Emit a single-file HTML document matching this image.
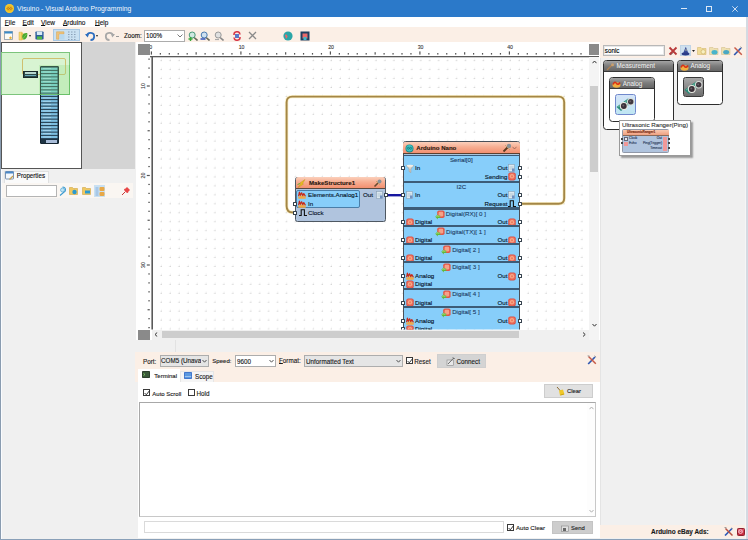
<!DOCTYPE html>
<html><head><meta charset="utf-8">
<style>
*{margin:0;padding:0;box-sizing:border-box}
html,body{width:748px;height:540px;overflow:hidden;background:#f0f0f0}
body{font-family:"Liberation Sans",sans-serif;font-size:6.2px;color:#111;position:relative}
.a{position:absolute}
.t{position:absolute;white-space:nowrap;line-height:1;-webkit-text-stroke:0.12px currentColor}
u{text-decoration-thickness:0.6px;text-underline-offset:0.3px}
</style></head><body>
<!-- window border -->
<div class="a" style="left:0;top:0;width:748px;height:540px;background:#f0f0f0"></div>
<!-- title bar -->
<div class="a" style="left:0;top:0;width:748px;height:17px;background:#2b79c9"></div>
<div class="a" style="left:5px;top:4px;width:9px;height:9px;border-radius:50%;background:#f2c23a"></div>
<div class="t" style="left:17px;top:5.6px;font-size:6.8px;color:#f4f8fc;-webkit-text-stroke:0">Visuino - Visual Arduino Programming</div>
<!-- title icons -->
<svg class="a" style="left:4.5px;top:3.5px" width="9" height="9" viewBox="0 0 9 9"><circle cx="4.5" cy="4.5" r="4.2" fill="#f2c630"/><circle cx="4.5" cy="4.5" r="3" fill="#e8b820"/><path d="M2 4.5c0.6-1.2 1.6-1.2 2.5 0s1.9 1.2 2.5 0c-0.6-1.2-1.6-1.2-2.5 0s-1.9 1.2-2.5 0z" fill="none" stroke="#b86a18" stroke-width="0.8"/></svg>
<div class="a" style="left:681px;top:8.2px;width:6px;height:0.9px;background:#dce8f6"></div>
<div class="a" style="left:705.9px;top:5.7px;width:6px;height:6px;border:0.9px solid #dce8f6"></div>
<svg class="a" style="left:731.5px;top:5.5px" width="6" height="6" viewBox="0 0 6 6"><path d="M0.3 0.3L5.7 5.7M5.7 0.3L0.3 5.7" stroke="#dce8f6" stroke-width="0.9"/></svg>
<!-- menu -->
<div class="a" style="left:0;top:17px;width:747px;height:10px;background:#fff"></div>
<div class="t" style="left:4.8px;top:19.8px;font-size:6.5px"><u>F</u>ile</div>
<div class="t" style="left:22.6px;top:19.8px;font-size:6.5px"><u>E</u>dit</div>
<div class="t" style="left:41px;top:19.8px;font-size:6.5px"><u>V</u>iew</div>
<div class="t" style="left:63px;top:19.8px;font-size:6.5px"><u>A</u>rduino</div>
<div class="t" style="left:95px;top:19.8px;font-size:6.5px"><u>H</u>elp</div>
<!-- toolbar -->
<div class="a" style="left:0;top:27px;width:747px;height:15.5px;background:#fbefe6"></div>
<!-- new -->
<svg class="a" style="left:4px;top:31px" width="9" height="9" viewBox="0 0 9 9"><rect x="0.5" y="0.5" width="8" height="8" fill="#fdfbf5" stroke="#8a9aa8" stroke-width="0.8"/><rect x="0.5" y="0.5" width="8" height="2" fill="#3a8ac8"/><path d="M6.5 5l0.5 1.2 1.2 0.2-0.9 0.8 0.3 1.2-1.1-0.6-1.1 0.6 0.3-1.2-0.9-0.8 1.2-0.2z" fill="#e8b030"/></svg>
<!-- open -->
<svg class="a" style="left:17.5px;top:30.5px" width="10" height="10" viewBox="0 0 10 10"><path d="M1 1.2h3.2v7.8h-3.2z" fill="#f2d870" stroke="#d8b040" stroke-width="0.5"/><path d="M3 1.5L5.5 2.5V9L3 8.5z" fill="#e8c050"/><path d="M4.2 5.5C4.2 2.8 7 1.8 9.3 2.2C9.6 5 8.6 8.4 5.5 8.6C4.8 7.8 4.2 6.8 4.2 5.5z" fill="#48a830"/><path d="M5 7.8C6 6 7.2 4.5 8.6 3.2" stroke="#90d870" stroke-width="0.6" fill="none"/></svg>
<div class="a" style="left:28.8px;top:34.6px;width:0;height:0;border-left:1.8px solid transparent;border-right:1.8px solid transparent;border-top:2.2px solid #222"></div>
<!-- save -->
<svg class="a" style="left:35px;top:31px" width="9" height="9" viewBox="0 0 9 9"><rect x="0.4" y="0.4" width="8.2" height="8.2" rx="0.8" fill="#2f5d9c"/><rect x="1.8" y="0.6" width="5.4" height="3.4" fill="#d8eaf6"/><rect x="2" y="5.4" width="5" height="3" fill="#52b848"/></svg>
<!-- toggle buttons -->
<div class="a" style="left:53px;top:29px;width:27px;height:12px;background:#c9e0f2;border:1px solid #a8c8e4"></div>
<svg class="a" style="left:56px;top:31px" width="9" height="9" viewBox="0 0 9 9"><path d="M0.5 0.8h7.5v2.2h-5v5.2h-2.5z" fill="#eec27a" stroke="#d4a458" stroke-width="0.5"/><rect x="3.5" y="3.5" width="5" height="5" fill="#b8d8ee"/></svg>
<svg class="a" style="left:67px;top:31px" width="10" height="9" viewBox="0 0 10 9"><g fill="#8aa0b8"><rect x="1" y="0.5" width="1.5" height="1"/><rect x="4" y="0.5" width="1.5" height="1"/><rect x="7" y="0.5" width="1.5" height="1"/><rect x="1" y="3" width="1.5" height="1"/><rect x="4" y="3" width="1.5" height="1"/><rect x="7" y="3" width="1.5" height="1"/><rect x="1" y="5.5" width="1.5" height="1"/><rect x="4" y="5.5" width="1.5" height="1"/><rect x="7" y="5.5" width="1.5" height="1"/><rect x="1" y="8" width="1.5" height="1"/><rect x="4" y="8" width="1.5" height="1"/><rect x="7" y="8" width="1.5" height="1"/></g></svg>
<!-- undo/redo -->
<svg class="a" style="left:85px;top:30.5px" width="11" height="10" viewBox="0 0 11 10"><path d="M2 5A3.6 3.6 0 1 1 5.5 9" fill="none" stroke="#2f6fc0" stroke-width="1.8"/><path d="M0 3.2L4 2.5L2.8 6.6z" fill="#2f6fc0"/></svg>
<div class="a" style="left:96.2px;top:34.6px;width:0;height:0;border-left:1.8px solid transparent;border-right:1.8px solid transparent;border-top:2.2px solid #222"></div>
<svg class="a" style="left:104px;top:30.5px" width="11" height="10" viewBox="0 0 11 10"><path d="M9 5A3.6 3.6 0 1 0 5.5 9" fill="none" stroke="#a8a8a8" stroke-width="1.8"/><path d="M11 3.2L7 2.5L8.2 6.6z" fill="#a8a8a8"/></svg>
<div class="a" style="left:115.5px;top:35.5px;width:3px;height:1px;background:#999"></div>
<div class="t" style="left:124px;top:32.5px;font-size:6.3px">Zoom:</div>
<div class="a" style="left:144px;top:29.5px;width:41px;height:12px;background:#fff;border:1px solid #acacac"></div>
<div class="t" style="left:146px;top:32.5px;font-size:6.3px">100%</div>
<svg class="a" style="left:177px;top:34px" width="6" height="4" viewBox="0 0 6 4"><path d="M0.5 0.5L3 3L5.5 0.5" fill="none" stroke="#555" stroke-width="0.8"/></svg>
<!-- zoom icons -->
<svg class="a" style="left:187.5px;top:30.5px" width="10" height="10" viewBox="0 0 10 10"><path d="M5.5 6L9.5 9.5" stroke="#6a6a5a" stroke-width="1.6"/><circle cx="4.2" cy="4" r="3" fill="#cfe8e0" stroke="#4a9a7a" stroke-width="1"/><path d="M0.5 8h4M2.5 6v4" stroke="#38a838" stroke-width="1.4"/></svg>
<svg class="a" style="left:200px;top:30.5px" width="10" height="10" viewBox="0 0 10 10"><path d="M5.5 6L9.5 9.5" stroke="#6a6a5a" stroke-width="1.6"/><circle cx="4.2" cy="4" r="3" fill="#cfe0f0" stroke="#4a7ab0" stroke-width="1"/><path d="M0.5 8h5" stroke="#2848b8" stroke-width="1.4"/></svg>
<svg class="a" style="left:213.5px;top:30.5px" width="10" height="10" viewBox="0 0 10 10"><path d="M5.5 6L9.5 9.5" stroke="#8a8a8a" stroke-width="1.6"/><circle cx="4.2" cy="4" r="3" fill="#e0e0e0" stroke="#9a9a9a" stroke-width="1"/><path d="M1 8.5h4" stroke="#aaa" stroke-width="1.2"/></svg>
<svg class="a" style="left:231.5px;top:30.5px" width="10" height="10" viewBox="0 0 10 10"><path d="M2 4A3 3 0 0 1 8 3.5" fill="none" stroke="#d83a4a" stroke-width="1.6"/><path d="M8 6A3 3 0 0 1 2 6.5" fill="none" stroke="#d83a4a" stroke-width="1.6"/><rect x="3" y="3" width="4" height="4" fill="#5a78c8"/></svg>
<svg class="a" style="left:248px;top:30.5px" width="9" height="9" viewBox="0 0 9 9"><path d="M1 1L8 8M8 1L1 8" stroke="#8a8a8a" stroke-width="1.3"/></svg>
<svg class="a" style="left:283px;top:30.5px" width="10" height="10" viewBox="0 0 10 10"><circle cx="5" cy="5" r="4.6" fill="#2aa6a8"/><path d="M2 4c1-1 2 0 2.5 1s-1 2-1.5 3" fill="#e86a6a"/></svg>
<svg class="a" style="left:299.5px;top:30.5px" width="10" height="10" viewBox="0 0 10 10"><rect x="0.5" y="0.5" width="9" height="9" fill="#1f3f5f"/><rect x="2.5" y="2.5" width="5" height="5" fill="#e86a6a"/><rect x="3.5" y="6" width="3" height="3" fill="#40b8c8"/></svg>
<!-- left panel -->
<div class="a" style="left:1px;top:42px;width:81px;height:127px;background:#fff;border:1px solid #555"></div>
<div class="a" style="left:82px;top:42px;width:53px;height:127px;background:#d4d4d4"></div>
<!-- minimap -->
<div class="a" style="left:1px;top:52px;width:69px;height:43px;background:#d8f4d2;border:1px solid #7cc47c"></div>
<div class="a" style="left:22px;top:57.5px;width:44px;height:17.5px;border:1px solid #cfc070;border-radius:2px"></div>
<div class="a" style="left:23px;top:70.5px;width:14.5px;height:7px;background:#2c4a48;border:1px solid #1a2a2a"></div>
<div class="a" style="left:24.5px;top:72px;width:11px;height:1.6px;background:#b8d8d0"></div>
<div class="a" style="left:24.5px;top:74.5px;width:11px;height:1.3px;background:#6aa8b8"></div>
<div class="a" style="left:39.5px;top:65.5px;width:19.5px;height:78.5px;background:#1e3444;border:1px solid #142430;border-radius:1px"></div>
<svg class="a" style="left:0;top:0" width="80" height="150" viewBox="0 0 80 150"><rect x="41" y="67.60" width="16.5" height="2.3" fill="#74ccd8"/><rect x="43" y="68.40" width="8" height="0.6" fill="#e8f8ff" opacity=".6"/><rect x="41" y="70.85" width="16.5" height="2.3" fill="#74ccd8"/><rect x="43" y="71.65" width="8" height="0.6" fill="#e8f8ff" opacity=".6"/><rect x="41" y="74.10" width="16.5" height="2.3" fill="#74ccd8"/><rect x="43" y="74.90" width="8" height="0.6" fill="#e8f8ff" opacity=".6"/><rect x="41" y="77.35" width="16.5" height="2.3" fill="#74ccd8"/><rect x="43" y="78.15" width="8" height="0.6" fill="#e8f8ff" opacity=".6"/><rect x="41" y="80.60" width="16.5" height="2.3" fill="#74ccd8"/><rect x="43" y="81.40" width="8" height="0.6" fill="#e8f8ff" opacity=".6"/><rect x="41" y="83.85" width="16.5" height="2.3" fill="#74ccd8"/><rect x="43" y="84.65" width="8" height="0.6" fill="#e8f8ff" opacity=".6"/><rect x="41" y="87.10" width="16.5" height="2.3" fill="#74ccd8"/><rect x="43" y="87.90" width="8" height="0.6" fill="#e8f8ff" opacity=".6"/><rect x="41" y="90.35" width="16.5" height="2.3" fill="#74ccd8"/><rect x="43" y="91.15" width="8" height="0.6" fill="#e8f8ff" opacity=".6"/><rect x="41" y="93.60" width="16.5" height="2.3" fill="#7cbee0"/><rect x="43" y="94.40" width="8" height="0.6" fill="#e8f8ff" opacity=".6"/><rect x="41" y="96.85" width="16.5" height="2.3" fill="#7cbee0"/><rect x="43" y="97.65" width="8" height="0.6" fill="#e8f8ff" opacity=".6"/><rect x="41" y="100.10" width="16.5" height="2.3" fill="#7cbee0"/><rect x="43" y="100.90" width="8" height="0.6" fill="#e8f8ff" opacity=".6"/><rect x="41" y="103.35" width="16.5" height="2.3" fill="#7cbee0"/><rect x="43" y="104.15" width="8" height="0.6" fill="#e8f8ff" opacity=".6"/><rect x="41" y="106.60" width="16.5" height="2.3" fill="#7cbee0"/><rect x="43" y="107.40" width="8" height="0.6" fill="#e8f8ff" opacity=".6"/><rect x="41" y="109.85" width="16.5" height="2.3" fill="#7cbee0"/><rect x="43" y="110.65" width="8" height="0.6" fill="#e8f8ff" opacity=".6"/><rect x="41" y="113.10" width="16.5" height="2.3" fill="#7cbee0"/><rect x="43" y="113.90" width="8" height="0.6" fill="#e8f8ff" opacity=".6"/><rect x="41" y="116.35" width="16.5" height="2.3" fill="#7cbee0"/><rect x="43" y="117.15" width="8" height="0.6" fill="#e8f8ff" opacity=".6"/><rect x="41" y="119.60" width="16.5" height="2.3" fill="#7cbee0"/><rect x="43" y="120.40" width="8" height="0.6" fill="#e8f8ff" opacity=".6"/><rect x="41" y="122.85" width="16.5" height="2.3" fill="#7cbee0"/><rect x="43" y="123.65" width="8" height="0.6" fill="#e8f8ff" opacity=".6"/><rect x="41" y="126.10" width="16.5" height="2.3" fill="#7cbee0"/><rect x="43" y="126.90" width="8" height="0.6" fill="#e8f8ff" opacity=".6"/><rect x="41" y="129.35" width="16.5" height="2.3" fill="#7cbee0"/><rect x="43" y="130.15" width="8" height="0.6" fill="#e8f8ff" opacity=".6"/><rect x="41" y="132.60" width="16.5" height="2.3" fill="#7cbee0"/><rect x="43" y="133.40" width="8" height="0.6" fill="#e8f8ff" opacity=".6"/><rect x="41" y="135.85" width="16.5" height="2.3" fill="#7cbee0"/><rect x="43" y="136.65" width="8" height="0.6" fill="#e8f8ff" opacity=".6"/></svg>
<div class="a" style="left:46px;top:139.5px;width:11px;height:3px;background:#a8bcd8"></div>
<div class="a" style="left:39px;top:65px;width:31px;height:30px;background:rgba(140,220,130,.28);border-right:1px solid rgba(100,190,100,.8);border-bottom:1px solid rgba(100,190,100,.8)"></div>
<!-- properties tab -->
<div class="a" style="left:4px;top:170.5px;width:45px;height:13px;background:#fafafa;border:1px solid #e0e0e0;border-bottom:none"></div>
<svg class="a" style="left:5px;top:171.3px" width="9" height="9" viewBox="0 0 9 9"><rect x="0.5" y="0.5" width="8" height="7.5" rx="0.6" fill="#f4f8fc" stroke="#5a7aa0" stroke-width="0.8"/><rect x="0.5" y="0.5" width="8" height="2" fill="#4a88c8"/><path d="M4.5 8.5L8 5" stroke="#c8a050" stroke-width="1.3"/></svg>
<div class="t" style="left:16.8px;top:173.3px;font-size:6.2px;transform:scaleY(1.12);transform-origin:0 50%">Properties</div>
<div class="a" style="left:2px;top:183px;width:131px;height:15px;background:#faf6f2"></div>
<div class="a" style="left:6px;top:185px;width:51px;height:12px;background:#fff;border:1px solid #b4b4b4"></div>
<svg class="a" style="left:58px;top:186px" width="9" height="10" viewBox="0 0 9 10"><path d="M4.5 1a3 3 0 0 1 3 3c0 1.5-1 2-2 2.5L2 9.5" fill="none" stroke="#3a9ad0" stroke-width="1.1"/><circle cx="4.5" cy="4" r="2" fill="#bfe4f4" stroke="#3a9ad0" stroke-width="0.6"/></svg>
<svg class="a" style="left:69px;top:186px" width="9" height="9" viewBox="0 0 9 9"><path d="M0.5 1.5h3l1 1h4v6h-8z" fill="#f0c860" stroke="#c89a30" stroke-width="0.5"/><circle cx="5.5" cy="6" r="2.2" fill="#2a9ad0"/></svg>
<svg class="a" style="left:82px;top:186px" width="9" height="9" viewBox="0 0 9 9"><path d="M0.5 1.5h3l1 1h4v6h-8z" fill="#f0c860" stroke="#c89a30" stroke-width="0.5"/><rect x="3" y="4.5" width="5" height="3" fill="#2a9ad0"/></svg>
<div class="a" style="left:94px;top:185px;width:11px;height:12px;background:#c9e0f2"></div>
<svg class="a" style="left:95px;top:185.5px" width="10" height="11" viewBox="0 0 10 11"><rect x="0.5" y="1" width="3" height="9" fill="#a8c8e8"/><rect x="4.5" y="1" width="5" height="4" rx="1" fill="#e8a848"/><rect x="4.5" y="6" width="5" height="4" rx="1" fill="#e8a848"/></svg>
<svg class="a" style="left:121px;top:186px" width="10" height="10" viewBox="0 0 10 10"><path d="M1 9L4.5 5.5" stroke="#c83a3a" stroke-width="1"/><path d="M3 4L6 1L9 4L6 7z" fill="#e84848"/><path d="M3.5 3l3.5 3.5" stroke="#e84848" stroke-width="1.5"/></svg>
<!-- center -->
<div class="a" style="left:135.5px;top:42px;width:464px;height:298px;background:#fff"></div>
<!--CANVAS-->
<div class="a" style="left:138px;top:44px;width:12px;height:11px;background:#8a8a8a"></div>
<div class="a" style="left:589px;top:44px;width:10px;height:11px;background:#8a8a8a"></div>
<div class="a" style="left:138px;top:329.5px;width:12px;height:10.5px;background:#8a8a8a"></div>
<svg class="a" style="left:0;top:0" width="748" height="540" viewBox="0 0 748 540"><defs><clipPath id="cr"><rect x="150" y="42" width="438" height="16"/></clipPath><clipPath id="cl"><rect x="136" y="57" width="16" height="272.5"/></clipPath><pattern id="grid" x="153" y="52.2" width="8.95" height="8.95" patternUnits="userSpaceOnUse"><rect x="6.9" y="7.9" width="4" height="1.2" fill="#eeeeee"/><rect x="8.3" y="6.5" width="1.2" height="4" fill="#eeeeee"/><rect x="7.9" y="7.9" width="2" height="1.6" fill="#d4d4d4"/></pattern></defs><g clip-path="url(#cr)"><text x="149.20" y="49.3" font-size="5.2" fill="#333" stroke="#444" stroke-width="0.1" font-family="Liberation Sans">0</text><rect x="150.80" y="51.40" width="1.2" height="3.20" fill="#555"/><rect x="159.75" y="53.00" width="1.2" height="1.60" fill="#555"/><rect x="168.70" y="53.00" width="1.2" height="1.60" fill="#555"/><rect x="177.65" y="53.00" width="1.2" height="1.60" fill="#555"/><rect x="186.60" y="53.00" width="1.2" height="1.60" fill="#555"/><rect x="195.55" y="52.20" width="1.2" height="2.40" fill="#555"/><rect x="204.50" y="53.00" width="1.2" height="1.60" fill="#555"/><rect x="213.45" y="53.00" width="1.2" height="1.60" fill="#555"/><rect x="222.40" y="53.00" width="1.2" height="1.60" fill="#555"/><rect x="231.35" y="53.00" width="1.2" height="1.60" fill="#555"/><text x="238.70" y="49.3" font-size="5.2" fill="#333" stroke="#444" stroke-width="0.1" font-family="Liberation Sans">10</text><rect x="240.30" y="51.40" width="1.2" height="3.20" fill="#555"/><rect x="249.25" y="53.00" width="1.2" height="1.60" fill="#555"/><rect x="258.20" y="53.00" width="1.2" height="1.60" fill="#555"/><rect x="267.15" y="53.00" width="1.2" height="1.60" fill="#555"/><rect x="276.10" y="53.00" width="1.2" height="1.60" fill="#555"/><rect x="285.05" y="52.20" width="1.2" height="2.40" fill="#555"/><rect x="294.00" y="53.00" width="1.2" height="1.60" fill="#555"/><rect x="302.95" y="53.00" width="1.2" height="1.60" fill="#555"/><rect x="311.90" y="53.00" width="1.2" height="1.60" fill="#555"/><rect x="320.85" y="53.00" width="1.2" height="1.60" fill="#555"/><text x="328.20" y="49.3" font-size="5.2" fill="#333" stroke="#444" stroke-width="0.1" font-family="Liberation Sans">20</text><rect x="329.80" y="51.40" width="1.2" height="3.20" fill="#555"/><rect x="338.75" y="53.00" width="1.2" height="1.60" fill="#555"/><rect x="347.70" y="53.00" width="1.2" height="1.60" fill="#555"/><rect x="356.65" y="53.00" width="1.2" height="1.60" fill="#555"/><rect x="365.60" y="53.00" width="1.2" height="1.60" fill="#555"/><rect x="374.55" y="52.20" width="1.2" height="2.40" fill="#555"/><rect x="383.50" y="53.00" width="1.2" height="1.60" fill="#555"/><rect x="392.45" y="53.00" width="1.2" height="1.60" fill="#555"/><rect x="401.40" y="53.00" width="1.2" height="1.60" fill="#555"/><rect x="410.35" y="53.00" width="1.2" height="1.60" fill="#555"/><text x="417.70" y="49.3" font-size="5.2" fill="#333" stroke="#444" stroke-width="0.1" font-family="Liberation Sans">30</text><rect x="419.30" y="51.40" width="1.2" height="3.20" fill="#555"/><rect x="428.25" y="53.00" width="1.2" height="1.60" fill="#555"/><rect x="437.20" y="53.00" width="1.2" height="1.60" fill="#555"/><rect x="446.15" y="53.00" width="1.2" height="1.60" fill="#555"/><rect x="455.10" y="53.00" width="1.2" height="1.60" fill="#555"/><rect x="464.05" y="52.20" width="1.2" height="2.40" fill="#555"/><rect x="473.00" y="53.00" width="1.2" height="1.60" fill="#555"/><rect x="481.95" y="53.00" width="1.2" height="1.60" fill="#555"/><rect x="490.90" y="53.00" width="1.2" height="1.60" fill="#555"/><rect x="499.85" y="53.00" width="1.2" height="1.60" fill="#555"/><text x="507.20" y="49.3" font-size="5.2" fill="#333" stroke="#444" stroke-width="0.1" font-family="Liberation Sans">40</text><rect x="508.80" y="51.40" width="1.2" height="3.20" fill="#555"/><rect x="517.75" y="53.00" width="1.2" height="1.60" fill="#555"/><rect x="526.70" y="53.00" width="1.2" height="1.60" fill="#555"/><rect x="535.65" y="53.00" width="1.2" height="1.60" fill="#555"/><rect x="544.60" y="53.00" width="1.2" height="1.60" fill="#555"/><rect x="553.55" y="52.20" width="1.2" height="2.40" fill="#555"/><rect x="562.50" y="53.00" width="1.2" height="1.60" fill="#555"/><rect x="571.45" y="53.00" width="1.2" height="1.60" fill="#555"/><rect x="580.40" y="53.00" width="1.2" height="1.60" fill="#555"/></g><g clip-path="url(#cl)"><rect x="148.30" y="58.55" width="1.50" height="1.2" fill="#555"/><rect x="148.30" y="67.50" width="1.50" height="1.2" fill="#555"/><rect x="148.30" y="76.45" width="1.50" height="1.2" fill="#555"/><text x="0" y="0" font-size="5.2" fill="#333" stroke="#444" stroke-width="0.1" font-family="Liberation Sans" transform="translate(145.3,89.00) rotate(-90)">10</text><rect x="146.80" y="85.40" width="3.00" height="1.2" fill="#555"/><rect x="148.30" y="94.35" width="1.50" height="1.2" fill="#555"/><rect x="148.30" y="103.30" width="1.50" height="1.2" fill="#555"/><rect x="148.30" y="112.25" width="1.50" height="1.2" fill="#555"/><rect x="148.30" y="121.20" width="1.50" height="1.2" fill="#555"/><rect x="147.55" y="130.15" width="2.25" height="1.2" fill="#555"/><rect x="148.30" y="139.10" width="1.50" height="1.2" fill="#555"/><rect x="148.30" y="148.05" width="1.50" height="1.2" fill="#555"/><rect x="148.30" y="157.00" width="1.50" height="1.2" fill="#555"/><rect x="148.30" y="165.95" width="1.50" height="1.2" fill="#555"/><text x="0" y="0" font-size="5.2" fill="#333" stroke="#444" stroke-width="0.1" font-family="Liberation Sans" transform="translate(145.3,178.50) rotate(-90)">20</text><rect x="146.80" y="174.90" width="3.00" height="1.2" fill="#555"/><rect x="148.30" y="183.85" width="1.50" height="1.2" fill="#555"/><rect x="148.30" y="192.80" width="1.50" height="1.2" fill="#555"/><rect x="148.30" y="201.75" width="1.50" height="1.2" fill="#555"/><rect x="148.30" y="210.70" width="1.50" height="1.2" fill="#555"/><rect x="147.55" y="219.65" width="2.25" height="1.2" fill="#555"/><rect x="148.30" y="228.60" width="1.50" height="1.2" fill="#555"/><rect x="148.30" y="237.55" width="1.50" height="1.2" fill="#555"/><rect x="148.30" y="246.50" width="1.50" height="1.2" fill="#555"/><rect x="148.30" y="255.45" width="1.50" height="1.2" fill="#555"/><text x="0" y="0" font-size="5.2" fill="#333" stroke="#444" stroke-width="0.1" font-family="Liberation Sans" transform="translate(145.3,268.00) rotate(-90)">30</text><rect x="146.80" y="264.40" width="3.00" height="1.2" fill="#555"/><rect x="148.30" y="273.35" width="1.50" height="1.2" fill="#555"/><rect x="148.30" y="282.30" width="1.50" height="1.2" fill="#555"/><rect x="148.30" y="291.25" width="1.50" height="1.2" fill="#555"/><rect x="148.30" y="300.20" width="1.50" height="1.2" fill="#555"/><rect x="147.55" y="309.15" width="2.25" height="1.2" fill="#555"/><rect x="148.30" y="318.10" width="1.50" height="1.2" fill="#555"/><rect x="148.30" y="327.05" width="1.50" height="1.2" fill="#555"/></g><rect x="153" y="57.5" width="435" height="272" fill="url(#grid)"/><rect x="150" y="56" width="449" height="1.3" fill="#5a5a5a"/><rect x="151.4" y="56" width="1.6" height="273.5" fill="#5a5a5a"/><path d="M295 212.5 L293 212.5 Q286.6 212.5 286.6 206 L286.6 102.2 Q286.6 96.6 292.2 96.6 L558.6 96.6 Q564.2 96.6 564.2 102.2 L564.2 198.2 Q564.2 203.7 558.7 203.7 L520 203.7" fill="none" stroke="#f8e8a8" stroke-width="3.4" opacity="0.6"/><path d="M295 212.5 L293 212.5 Q286.6 212.5 286.6 206 L286.6 102.2 Q286.6 96.6 292.2 96.6 L558.6 96.6 Q564.2 96.6 564.2 102.2 L564.2 198.2 Q564.2 203.7 558.7 203.7 L520 203.7" fill="none" stroke="#a48646" stroke-width="1.9"/><path d="M386 195.2 L402.6 195.2" fill="none" stroke="#1616a0" stroke-width="2.4"/></svg>
<!--/CANVAS-->
<!--COMP-->
<div class="a" style="left:295.20px;top:176.70px;width:90.60px;height:45.10px;background:#b0c4de;border:1px solid #4e5862;border-radius:2.5px"></div>
<div class="a" style="left:295.70px;top:177.20px;width:89.60px;height:12.00px;background:linear-gradient(#fbd0bc,#f7ae92 45%,#f29070);border-bottom:1px solid #5a4a40;border-radius:2px 2px 0 0"></div>
<svg class="a" style="left:296.50px;top:178.50px" width="9" height="9" viewBox="0 0 9 9"><path d="M1 8.5L4 4.5L3 4L8 0.5L5.5 4.5L6.5 5z" fill="#e8c020" stroke="#b89010" stroke-width="0.4"/><path d="M0.5 5.5l2.5 -1" stroke="#60b030" stroke-width="1"/></svg>
<div class="t" style="left:309.00px;top:180.09px;font-size:6.15px;font-weight:bold;color:#2a1810;-webkit-text-stroke:0.12px #2a1810;">MakeStructure1</div>
<svg class="a" style="left:373.00px;top:178.50px" width="9" height="9" viewBox="0 0 9 9"><path d="M1.5 7.5L6 3" stroke="#6a4a30" stroke-width="1.6"/><circle cx="6.5" cy="2.5" r="2" fill="#889098"/><path d="M3 2l4 4" stroke="#c0a060" stroke-width="0.8"/></svg>
<div class="a" style="left:295.90px;top:190.40px;width:64.10px;height:17.40px;background:#87cefa;border:1px solid #4a7ea8;border-radius:2px"></div>
<svg class="a" style="left:297.50px;top:191.20px" width="8" height="8" viewBox="0 0 8 8"><path d="M0.3 7.7V4.8L1.5 6L2.5 2.5L3.8 5.2L5 3.5L6.3 5.8L7.7 4.8V7.7z" fill="#f0a848"/><path d="M0.6 5.2L1.4 1.2L2.4 4.2L3.6 1.8L4.8 4.6L5.8 2.6L7.4 5.2" fill="none" stroke="#c82818" stroke-width="1.2" stroke-linejoin="round"/></svg>
<div class="t" style="left:308.00px;top:192.16px;font-size:6.2px;color:#061226;-webkit-text-stroke:0.12px #061226;">Elements.Analog1</div>
<svg class="a" style="left:297.50px;top:199.60px" width="8" height="8" viewBox="0 0 8 8"><path d="M0.3 7.7V4.8L1.5 6L2.5 2.5L3.8 5.2L5 3.5L6.3 5.8L7.7 4.8V7.7z" fill="#f0a848"/><path d="M0.6 5.2L1.4 1.2L2.4 4.2L3.6 1.8L4.8 4.6L5.8 2.6L7.4 5.2" fill="none" stroke="#c82818" stroke-width="1.2" stroke-linejoin="round"/></svg>
<div class="t" style="left:308.00px;top:200.56px;font-size:6.2px;color:#061226;-webkit-text-stroke:0.12px #061226;">In</div>
<div class="a" style="left:293.20px;top:201.60px;width:4.00px;height:4.00px;background:#fff;border:1px solid #34404c;border-radius:0.6px"></div>
<svg class="a" style="left:298.50px;top:209.20px" width="8" height="7" viewBox="0 0 8 7"><path d="M0 6.5h2.2V0.8h3.2v5.7H8" fill="none" stroke="#111" stroke-width="1.1"/></svg>
<div class="t" style="left:308.00px;top:209.56px;font-size:6.2px;color:#061226;-webkit-text-stroke:0.12px #061226;">Clock</div>
<div class="a" style="left:293.20px;top:210.60px;width:4.00px;height:4.00px;background:#fff;border:1px solid #34404c;border-radius:0.6px"></div>
<div class="t" style="left:363.00px;top:192.16px;font-size:6.2px;color:#061226;-webkit-text-stroke:0.12px #061226;">Out</div>
<svg class="a" style="left:375.50px;top:191.20px" width="7" height="8" viewBox="0 0 7 8"><rect x="0.5" y="0.5" width="6" height="7" fill="#dce8f0" stroke="#8aa0b4" stroke-width="0.6"/><path d="M1.5 3h4M1.5 5h4" stroke="#98b0c0" stroke-width="0.6"/><rect x="4" y="4.5" width="2.5" height="3" fill="#7090c0"/></svg>
<div class="a" style="left:383.80px;top:193.20px;width:4.00px;height:4.00px;background:#fff;border:1px solid #34404c;border-radius:0.6px"></div>
<div class="a" style="left:0;top:0;width:748px;height:540px;clip-path:inset(57px 160px 210.5px 153px)">
<div class="a" style="left:402.60px;top:141.30px;width:117.60px;height:203.70px;background:#87cefa;border:1px solid #4a5058;border-radius:2.5px"></div>
<div class="a" style="left:403.10px;top:141.80px;width:116.60px;height:12.00px;background:linear-gradient(#fbd0bc,#f7ae92 45%,#f29070);border-bottom:1px solid #5a4030;border-radius:2px 2px 0 0"></div>
<div class="a" style="left:403.60px;top:153.80px;width:115.90px;height:1.40px;background:#a8c4dc"></div>
<div class="a" style="left:403.60px;top:155.20px;width:115.90px;height:1.10px;background:#3a5a78"></div>
<svg class="a" style="left:405.00px;top:143.50px" width="9" height="9" viewBox="0 0 9 9"><circle cx="4.5" cy="4.5" r="4" fill="#1a8a8a"/><circle cx="4.5" cy="4.2" r="3.2" fill="#3cc0c0"/><path d="M2.3 4.3a1 1 0 1 0 2 0a1 1 0 1 0 -2 0M4.7 4.3a1 1 0 1 0 2 0a1 1 0 1 0 -2 0" fill="none" stroke="#0a6a6a" stroke-width="0.6"/></svg>
<div class="t" style="left:416.30px;top:144.64px;font-size:6.05px;font-weight:bold;color:#2a1810;-webkit-text-stroke:0.12px #2a1810;">Arduino Nano</div>
<svg class="a" style="left:501.50px;top:143.00px" width="10" height="10" viewBox="0 0 10 10"><path d="M1.5 8.5L6.5 3.5" stroke="#5a3a20" stroke-width="1.8"/><circle cx="7" cy="3" r="2.2" fill="#8a9298"/><path d="M3 2l5 5" stroke="#b8a070" stroke-width="0.8"/></svg>
<svg class="a" style="left:512.00px;top:145.50px" width="5" height="4" viewBox="0 0 5 4"><path d="M0.5 0.8L2.5 3L4.5 0.8" fill="none" stroke="#8a5a4a" stroke-width="0.7"/></svg>
<div class="t" style="left:361.30px;width:200px;text-align:center;top:157.16px;font-size:6.2px;color:#1c3c64;-webkit-text-stroke:0.12px #1c3c64;">Serial[0]</div>
<div class="a" style="left:400.60px;top:166.00px;width:4.00px;height:4.00px;background:#fff;border:1px solid #34404c;border-radius:0.6px"></div>
<svg class="a" style="left:406.00px;top:163.50px" width="8" height="9" viewBox="0 0 8 9"><path d="M0.5 1.5h7L4.8 5v3.5L3.2 7.5V5z" fill="#e0d8d0" stroke="#a89888" stroke-width="0.6"/><ellipse cx="4" cy="1.7" rx="3.3" ry="1" fill="#f4f0e8"/></svg>
<div class="t" style="left:415.00px;top:165.16px;font-size:6.2px;color:#061226;-webkit-text-stroke:0.12px #061226;">In</div>
<div class="t" style="right:240.50px;top:164.56px;font-size:6.2px;color:#061226;-webkit-text-stroke:0.12px #061226;">Out</div>
<svg class="a" style="left:508.00px;top:163.50px" width="7" height="8" viewBox="0 0 7 8"><rect x="0.5" y="0.5" width="6" height="7" fill="#dce8f0" stroke="#8aa0b4" stroke-width="0.6"/><path d="M1.5 3h4M1.5 5h4" stroke="#98b0c0" stroke-width="0.6"/><rect x="4" y="4.5" width="2.5" height="3" fill="#7090c0"/></svg>
<div class="a" style="left:518.00px;top:166.00px;width:4.00px;height:4.00px;background:#fff;border:1px solid #34404c;border-radius:0.6px"></div>
<div class="t" style="right:240.50px;top:173.56px;font-size:6.2px;color:#061226;-webkit-text-stroke:0.12px #061226;">Sending</div>
<svg class="a" style="left:508.00px;top:172.30px" width="8" height="9" viewBox="0 0 8 9"><rect x="0.3" y="0.4" width="7.4" height="8" rx="2" fill="#d84c40"/><rect x="0.9" y="0.9" width="6.2" height="6.8" rx="1.7" fill="#ea6a58"/><circle cx="4" cy="4.3" r="2.2" fill="#f8a888"/><circle cx="4" cy="4.3" r="1.1" fill="#ee7a60"/></svg>
<div class="a" style="left:518.00px;top:175.00px;width:4.00px;height:4.00px;background:#fff;border:1px solid #34404c;border-radius:0.6px"></div>
<div class="a" style="left:403.60px;top:180.50px;width:115.90px;height:2.40px;background:#3c5c78"></div>
<div class="t" style="left:361.30px;width:200px;text-align:center;top:184.16px;font-size:6.2px;color:#1c3c64;-webkit-text-stroke:0.12px #1c3c64;">I2C</div>
<div class="a" style="left:400.60px;top:193.20px;width:4.00px;height:4.00px;background:#fff;border:1px solid #34404c;border-radius:0.6px"></div>
<svg class="a" style="left:406.00px;top:191.00px" width="7" height="8" viewBox="0 0 7 8"><rect x="0.5" y="0.5" width="6" height="7" fill="#dce8f0" stroke="#8aa0b4" stroke-width="0.6"/><path d="M1.5 3h4M1.5 5h4" stroke="#98b0c0" stroke-width="0.6"/><rect x="4" y="4.5" width="2.5" height="3" fill="#7090c0"/></svg>
<div class="t" style="left:415.00px;top:192.36px;font-size:6.2px;color:#061226;-webkit-text-stroke:0.12px #061226;">In</div>
<div class="t" style="right:240.50px;top:191.96px;font-size:6.2px;color:#061226;-webkit-text-stroke:0.12px #061226;">Out</div>
<svg class="a" style="left:508.00px;top:191.00px" width="7" height="8" viewBox="0 0 7 8"><rect x="0.5" y="0.5" width="6" height="7" fill="#dce8f0" stroke="#8aa0b4" stroke-width="0.6"/><path d="M1.5 3h4M1.5 5h4" stroke="#98b0c0" stroke-width="0.6"/><rect x="4" y="4.5" width="2.5" height="3" fill="#7090c0"/></svg>
<div class="a" style="left:518.00px;top:192.80px;width:4.00px;height:4.00px;background:#fff;border:1px solid #34404c;border-radius:0.6px"></div>
<div class="t" style="right:240.50px;top:200.56px;font-size:6.2px;color:#061226;-webkit-text-stroke:0.12px #061226;">Request</div>
<svg class="a" style="left:508.00px;top:200.30px" width="8" height="7" viewBox="0 0 8 7"><path d="M0 6.5h2.2V0.8h3.2v5.7H8" fill="none" stroke="#111" stroke-width="1.1"/></svg>
<div class="a" style="left:518.00px;top:201.70px;width:4.00px;height:4.00px;background:#fff;border:1px solid #34404c;border-radius:0.6px"></div>
<div class="a" style="left:403.60px;top:207.20px;width:115.90px;height:2.40px;background:#3c5c78"></div>
<div class="a" style="left:360.30px;width:200px;top:209.30px;height:10px;display:flex;justify-content:center;align-items:flex-start"><svg width="10" height="10" viewBox="0 0 10 10" style="margin-top:0.4px;margin-right:1.2px"><rect x="2.2" y="0.4" width="7.4" height="7.6" rx="1.8" fill="#e25848"/><rect x="3.6" y="1.8" width="4.6" height="4.6" rx="1.2" fill="#f6a088"/><path d="M0.3 6.8L2.8 4.3V5.6H5.2V8H2.8V9.4z" fill="#62b83a"/><path d="M1.2 6.8L2.6 5.5V6.3H4.5" stroke="#b8e890" stroke-width="0.6" fill="none"/></svg><span style="font-size:6.2px;line-height:1;color:#1c3c64;-webkit-text-stroke:0.1px #1c3c64;margin-top:1.56px;white-space:nowrap">Digital(RX)[ 0 ]</span></div>
<div class="a" style="left:400.60px;top:220.20px;width:4.00px;height:4.00px;background:#fff;border:1px solid #34404c;border-radius:0.6px"></div>
<svg class="a" style="left:406.00px;top:218.00px" width="8" height="9" viewBox="0 0 8 9"><rect x="0.3" y="0.4" width="7.4" height="8" rx="2" fill="#d84c40"/><rect x="0.9" y="0.9" width="6.2" height="6.8" rx="1.7" fill="#ea6a58"/><circle cx="4" cy="4.3" r="2.2" fill="#f8a888"/><circle cx="4" cy="4.3" r="1.1" fill="#ee7a60"/></svg>
<div class="t" style="left:415.00px;top:219.36px;font-size:6.2px;color:#061226;-webkit-text-stroke:0.12px #061226;">Digital</div>
<div class="t" style="right:240.50px;top:219.16px;font-size:6.2px;color:#061226;-webkit-text-stroke:0.12px #061226;">Out</div>
<svg class="a" style="left:508.00px;top:218.00px" width="8" height="9" viewBox="0 0 8 9"><rect x="0.3" y="0.4" width="7.4" height="8" rx="2" fill="#d84c40"/><rect x="0.9" y="0.9" width="6.2" height="6.8" rx="1.7" fill="#ea6a58"/><circle cx="4" cy="4.3" r="2.2" fill="#f8a888"/><circle cx="4" cy="4.3" r="1.1" fill="#ee7a60"/></svg>
<div class="a" style="left:518.00px;top:220.20px;width:4.00px;height:4.00px;background:#fff;border:1px solid #34404c;border-radius:0.6px"></div>
<div class="a" style="left:360.30px;width:200px;top:227.10px;height:10px;display:flex;justify-content:center;align-items:flex-start"><svg width="10" height="10" viewBox="0 0 10 10" style="margin-top:0.4px;margin-right:1.2px"><rect x="2.2" y="0.4" width="7.4" height="7.6" rx="1.8" fill="#e25848"/><rect x="3.6" y="1.8" width="4.6" height="4.6" rx="1.2" fill="#f6a088"/><path d="M0.3 6.8L2.8 4.3V5.6H5.2V8H2.8V9.4z" fill="#62b83a"/><path d="M1.2 6.8L2.6 5.5V6.3H4.5" stroke="#b8e890" stroke-width="0.6" fill="none"/></svg><span style="font-size:6.2px;line-height:1;color:#1c3c64;-webkit-text-stroke:0.1px #1c3c64;margin-top:1.56px;white-space:nowrap">Digital(TX)[ 1 ]</span></div>
<div class="a" style="left:400.60px;top:238.00px;width:4.00px;height:4.00px;background:#fff;border:1px solid #34404c;border-radius:0.6px"></div>
<svg class="a" style="left:406.00px;top:235.80px" width="8" height="9" viewBox="0 0 8 9"><rect x="0.3" y="0.4" width="7.4" height="8" rx="2" fill="#d84c40"/><rect x="0.9" y="0.9" width="6.2" height="6.8" rx="1.7" fill="#ea6a58"/><circle cx="4" cy="4.3" r="2.2" fill="#f8a888"/><circle cx="4" cy="4.3" r="1.1" fill="#ee7a60"/></svg>
<div class="t" style="left:415.00px;top:237.16px;font-size:6.2px;color:#061226;-webkit-text-stroke:0.12px #061226;">Digital</div>
<div class="t" style="right:240.50px;top:236.96px;font-size:6.2px;color:#061226;-webkit-text-stroke:0.12px #061226;">Out</div>
<svg class="a" style="left:508.00px;top:235.80px" width="8" height="9" viewBox="0 0 8 9"><rect x="0.3" y="0.4" width="7.4" height="8" rx="2" fill="#d84c40"/><rect x="0.9" y="0.9" width="6.2" height="6.8" rx="1.7" fill="#ea6a58"/><circle cx="4" cy="4.3" r="2.2" fill="#f8a888"/><circle cx="4" cy="4.3" r="1.1" fill="#ee7a60"/></svg>
<div class="a" style="left:518.00px;top:238.00px;width:4.00px;height:4.00px;background:#fff;border:1px solid #34404c;border-radius:0.6px"></div>
<div class="a" style="left:360.30px;width:200px;top:245.00px;height:10px;display:flex;justify-content:center;align-items:flex-start"><svg width="10" height="10" viewBox="0 0 10 10" style="margin-top:0.4px;margin-right:1.2px"><rect x="2.2" y="0.4" width="7.4" height="7.6" rx="1.8" fill="#e25848"/><rect x="3.6" y="1.8" width="4.6" height="4.6" rx="1.2" fill="#f6a088"/><path d="M0.3 6.8L2.8 4.3V5.6H5.2V8H2.8V9.4z" fill="#62b83a"/><path d="M1.2 6.8L2.6 5.5V6.3H4.5" stroke="#b8e890" stroke-width="0.6" fill="none"/></svg><span style="font-size:6.2px;line-height:1;color:#1c3c64;-webkit-text-stroke:0.1px #1c3c64;margin-top:1.56px;white-space:nowrap">Digital[ 2 ]</span></div>
<div class="a" style="left:400.60px;top:255.90px;width:4.00px;height:4.00px;background:#fff;border:1px solid #34404c;border-radius:0.6px"></div>
<svg class="a" style="left:406.00px;top:253.70px" width="8" height="9" viewBox="0 0 8 9"><rect x="0.3" y="0.4" width="7.4" height="8" rx="2" fill="#d84c40"/><rect x="0.9" y="0.9" width="6.2" height="6.8" rx="1.7" fill="#ea6a58"/><circle cx="4" cy="4.3" r="2.2" fill="#f8a888"/><circle cx="4" cy="4.3" r="1.1" fill="#ee7a60"/></svg>
<div class="t" style="left:415.00px;top:255.06px;font-size:6.2px;color:#061226;-webkit-text-stroke:0.12px #061226;">Digital</div>
<div class="t" style="right:240.50px;top:254.86px;font-size:6.2px;color:#061226;-webkit-text-stroke:0.12px #061226;">Out</div>
<svg class="a" style="left:508.00px;top:253.70px" width="8" height="9" viewBox="0 0 8 9"><rect x="0.3" y="0.4" width="7.4" height="8" rx="2" fill="#d84c40"/><rect x="0.9" y="0.9" width="6.2" height="6.8" rx="1.7" fill="#ea6a58"/><circle cx="4" cy="4.3" r="2.2" fill="#f8a888"/><circle cx="4" cy="4.3" r="1.1" fill="#ee7a60"/></svg>
<div class="a" style="left:518.00px;top:255.90px;width:4.00px;height:4.00px;background:#fff;border:1px solid #34404c;border-radius:0.6px"></div>
<div class="a" style="left:360.30px;width:200px;top:262.90px;height:10px;display:flex;justify-content:center;align-items:flex-start"><svg width="10" height="10" viewBox="0 0 10 10" style="margin-top:0.4px;margin-right:1.2px"><rect x="2.2" y="0.4" width="7.4" height="7.6" rx="1.8" fill="#e25848"/><rect x="3.6" y="1.8" width="4.6" height="4.6" rx="1.2" fill="#f6a088"/><path d="M0.3 6.8L2.8 4.3V5.6H5.2V8H2.8V9.4z" fill="#62b83a"/><path d="M1.2 6.8L2.6 5.5V6.3H4.5" stroke="#b8e890" stroke-width="0.6" fill="none"/></svg><span style="font-size:6.2px;line-height:1;color:#1c3c64;-webkit-text-stroke:0.1px #1c3c64;margin-top:1.56px;white-space:nowrap">Digital[ 3 ]</span></div>
<div class="a" style="left:400.60px;top:273.80px;width:4.00px;height:4.00px;background:#fff;border:1px solid #34404c;border-radius:0.6px"></div>
<svg class="a" style="left:406.00px;top:271.80px" width="8" height="8" viewBox="0 0 8 8"><path d="M0.3 7.7V4.8L1.5 6L2.5 2.5L3.8 5.2L5 3.5L6.3 5.8L7.7 4.8V7.7z" fill="#f0a848"/><path d="M0.6 5.2L1.4 1.2L2.4 4.2L3.6 1.8L4.8 4.6L5.8 2.6L7.4 5.2" fill="none" stroke="#c82818" stroke-width="1.2" stroke-linejoin="round"/></svg>
<div class="t" style="left:415.00px;top:272.96px;font-size:6.2px;color:#061226;-webkit-text-stroke:0.12px #061226;">Analog</div>
<div class="t" style="right:240.50px;top:272.76px;font-size:6.2px;color:#061226;-webkit-text-stroke:0.12px #061226;">Out</div>
<svg class="a" style="left:508.00px;top:271.60px" width="8" height="9" viewBox="0 0 8 9"><rect x="0.3" y="0.4" width="7.4" height="8" rx="2" fill="#d84c40"/><rect x="0.9" y="0.9" width="6.2" height="6.8" rx="1.7" fill="#ea6a58"/><circle cx="4" cy="4.3" r="2.2" fill="#f8a888"/><circle cx="4" cy="4.3" r="1.1" fill="#ee7a60"/></svg>
<div class="a" style="left:518.00px;top:273.80px;width:4.00px;height:4.00px;background:#fff;border:1px solid #34404c;border-radius:0.6px"></div>
<div class="a" style="left:400.60px;top:282.00px;width:4.00px;height:4.00px;background:#fff;border:1px solid #34404c;border-radius:0.6px"></div>
<svg class="a" style="left:406.00px;top:279.80px" width="8" height="9" viewBox="0 0 8 9"><rect x="0.3" y="0.4" width="7.4" height="8" rx="2" fill="#d84c40"/><rect x="0.9" y="0.9" width="6.2" height="6.8" rx="1.7" fill="#ea6a58"/><circle cx="4" cy="4.3" r="2.2" fill="#f8a888"/><circle cx="4" cy="4.3" r="1.1" fill="#ee7a60"/></svg>
<div class="t" style="left:415.00px;top:281.16px;font-size:6.2px;color:#061226;-webkit-text-stroke:0.12px #061226;">Digital</div>
<div class="a" style="left:360.30px;width:200px;top:289.70px;height:10px;display:flex;justify-content:center;align-items:flex-start"><svg width="10" height="10" viewBox="0 0 10 10" style="margin-top:0.4px;margin-right:1.2px"><rect x="2.2" y="0.4" width="7.4" height="7.6" rx="1.8" fill="#e25848"/><rect x="3.6" y="1.8" width="4.6" height="4.6" rx="1.2" fill="#f6a088"/><path d="M0.3 6.8L2.8 4.3V5.6H5.2V8H2.8V9.4z" fill="#62b83a"/><path d="M1.2 6.8L2.6 5.5V6.3H4.5" stroke="#b8e890" stroke-width="0.6" fill="none"/></svg><span style="font-size:6.2px;line-height:1;color:#1c3c64;-webkit-text-stroke:0.1px #1c3c64;margin-top:1.56px;white-space:nowrap">Digital[ 4 ]</span></div>
<div class="a" style="left:400.60px;top:300.60px;width:4.00px;height:4.00px;background:#fff;border:1px solid #34404c;border-radius:0.6px"></div>
<svg class="a" style="left:406.00px;top:298.40px" width="8" height="9" viewBox="0 0 8 9"><rect x="0.3" y="0.4" width="7.4" height="8" rx="2" fill="#d84c40"/><rect x="0.9" y="0.9" width="6.2" height="6.8" rx="1.7" fill="#ea6a58"/><circle cx="4" cy="4.3" r="2.2" fill="#f8a888"/><circle cx="4" cy="4.3" r="1.1" fill="#ee7a60"/></svg>
<div class="t" style="left:415.00px;top:299.76px;font-size:6.2px;color:#061226;-webkit-text-stroke:0.12px #061226;">Digital</div>
<div class="t" style="right:240.50px;top:299.56px;font-size:6.2px;color:#061226;-webkit-text-stroke:0.12px #061226;">Out</div>
<svg class="a" style="left:508.00px;top:298.40px" width="8" height="9" viewBox="0 0 8 9"><rect x="0.3" y="0.4" width="7.4" height="8" rx="2" fill="#d84c40"/><rect x="0.9" y="0.9" width="6.2" height="6.8" rx="1.7" fill="#ea6a58"/><circle cx="4" cy="4.3" r="2.2" fill="#f8a888"/><circle cx="4" cy="4.3" r="1.1" fill="#ee7a60"/></svg>
<div class="a" style="left:518.00px;top:300.60px;width:4.00px;height:4.00px;background:#fff;border:1px solid #34404c;border-radius:0.6px"></div>
<div class="a" style="left:360.30px;width:200px;top:307.70px;height:10px;display:flex;justify-content:center;align-items:flex-start"><svg width="10" height="10" viewBox="0 0 10 10" style="margin-top:0.4px;margin-right:1.2px"><rect x="2.2" y="0.4" width="7.4" height="7.6" rx="1.8" fill="#e25848"/><rect x="3.6" y="1.8" width="4.6" height="4.6" rx="1.2" fill="#f6a088"/><path d="M0.3 6.8L2.8 4.3V5.6H5.2V8H2.8V9.4z" fill="#62b83a"/><path d="M1.2 6.8L2.6 5.5V6.3H4.5" stroke="#b8e890" stroke-width="0.6" fill="none"/></svg><span style="font-size:6.2px;line-height:1;color:#1c3c64;-webkit-text-stroke:0.1px #1c3c64;margin-top:1.56px;white-space:nowrap">Digital[ 5 ]</span></div>
<div class="a" style="left:400.60px;top:318.60px;width:4.00px;height:4.00px;background:#fff;border:1px solid #34404c;border-radius:0.6px"></div>
<svg class="a" style="left:406.00px;top:316.60px" width="8" height="8" viewBox="0 0 8 8"><path d="M0.3 7.7V4.8L1.5 6L2.5 2.5L3.8 5.2L5 3.5L6.3 5.8L7.7 4.8V7.7z" fill="#f0a848"/><path d="M0.6 5.2L1.4 1.2L2.4 4.2L3.6 1.8L4.8 4.6L5.8 2.6L7.4 5.2" fill="none" stroke="#c82818" stroke-width="1.2" stroke-linejoin="round"/></svg>
<div class="t" style="left:415.00px;top:317.76px;font-size:6.2px;color:#061226;-webkit-text-stroke:0.12px #061226;">Analog</div>
<div class="t" style="right:240.50px;top:317.56px;font-size:6.2px;color:#061226;-webkit-text-stroke:0.12px #061226;">Out</div>
<svg class="a" style="left:508.00px;top:316.40px" width="8" height="9" viewBox="0 0 8 9"><rect x="0.3" y="0.4" width="7.4" height="8" rx="2" fill="#d84c40"/><rect x="0.9" y="0.9" width="6.2" height="6.8" rx="1.7" fill="#ea6a58"/><circle cx="4" cy="4.3" r="2.2" fill="#f8a888"/><circle cx="4" cy="4.3" r="1.1" fill="#ee7a60"/></svg>
<div class="a" style="left:518.00px;top:318.60px;width:4.00px;height:4.00px;background:#fff;border:1px solid #34404c;border-radius:0.6px"></div>
<div class="a" style="left:400.60px;top:326.80px;width:4.00px;height:4.00px;background:#fff;border:1px solid #34404c;border-radius:0.6px"></div>
<svg class="a" style="left:406.00px;top:324.60px" width="8" height="9" viewBox="0 0 8 9"><rect x="0.3" y="0.4" width="7.4" height="8" rx="2" fill="#d84c40"/><rect x="0.9" y="0.9" width="6.2" height="6.8" rx="1.7" fill="#ea6a58"/><circle cx="4" cy="4.3" r="2.2" fill="#f8a888"/><circle cx="4" cy="4.3" r="1.1" fill="#ee7a60"/></svg>
<div class="t" style="left:415.00px;top:325.96px;font-size:6.2px;color:#061226;-webkit-text-stroke:0.12px #061226;">Digital</div>
<div class="a" style="left:403.60px;top:225.00px;width:115.90px;height:2.40px;background:#3c5c78"></div>
<div class="a" style="left:403.60px;top:242.90px;width:115.90px;height:2.40px;background:#3c5c78"></div>
<div class="a" style="left:403.60px;top:260.80px;width:115.90px;height:2.40px;background:#3c5c78"></div>
<div class="a" style="left:403.60px;top:288.00px;width:115.90px;height:2.40px;background:#3c5c78"></div>
<div class="a" style="left:403.60px;top:305.50px;width:115.90px;height:2.40px;background:#3c5c78"></div>
</div>
<!--/COMP-->
<!--SERIAL-->
<div class="a" style="left:152.00px;top:329.50px;width:437.00px;height:10.50px;background:#f0f0f0"></div>
<svg class="a" style="left:154.00px;top:331.80px" width="5" height="5" viewBox="0 0 5 5"><path d="M3.2 0.5L1 2.5L3.2 4.5" fill="none" stroke="#333" stroke-width="1"/></svg>
<div class="a" style="left:162.00px;top:330.80px;width:356.50px;height:7.40px;background:#cdcdcd"></div>
<svg class="a" style="left:582.00px;top:331.80px" width="5" height="5" viewBox="0 0 5 5"><path d="M1 0.5L3.2 2.5L1 4.5" fill="none" stroke="#333" stroke-width="1"/></svg>
<div class="a" style="left:589.00px;top:57.30px;width:10.00px;height:282.70px;background:#f4f4f4"></div>
<svg class="a" style="left:591.50px;top:60.00px" width="5" height="5" viewBox="0 0 5 5"><path d="M0.5 3.2L2.5 1L4.5 3.2" fill="none" stroke="#333" stroke-width="1"/></svg>
<div class="a" style="left:590.00px;top:86.00px;width:7.50px;height:86.00px;background:#cdcdcd"></div>
<svg class="a" style="left:591.50px;top:322.50px" width="5" height="5" viewBox="0 0 5 5"><path d="M0.5 1L2.5 3.2L4.5 1" fill="none" stroke="#333" stroke-width="1"/></svg>
<div class="a" style="left:135.00px;top:340.00px;width:465.00px;height:12.00px;background:#f0f0f0"></div>
<div class="a" style="left:175.00px;top:340.00px;width:0.80px;height:11.50px;background:#e2e2e2"></div>
<div class="a" style="left:135.00px;top:352.00px;width:465.00px;height:30.00px;background:#fbefe6"></div>
<div class="t" style="left:143.00px;top:358.51px;font-size:6.3px;color:#1a1a1a;">Port:</div>
<div class="a" style="left:159.80px;top:355.40px;width:49.20px;height:11.40px;background:#e5e5e5;border:1px solid #adadad"></div>
<div class="a" style="left:161px;top:357.8px;width:40px;height:8px;overflow:hidden"><div class="t" style="left:0;top:0;font-size:6.3px;color:#1a1a1a">COM5 (Unavailable)</div></div>
<svg class="a" style="left:201.80px;top:358.70px" width="5" height="5" viewBox="0 0 5 5"><path d="M0.5 1L2.5 3.2L4.5 1" fill="none" stroke="#555" stroke-width="1"/></svg>
<div class="t" style="left:212.20px;top:358.41px;font-size:6.1px;color:#1a1a1a;">Speed:</div>
<div class="a" style="left:235.00px;top:355.20px;width:40.60px;height:11.80px;background:#fff;border:1px solid #adadad"></div>
<div class="t" style="left:237.00px;top:358.51px;font-size:6.3px;color:#1a1a1a;">9600</div>
<svg class="a" style="left:268.50px;top:358.70px" width="5" height="5" viewBox="0 0 5 5"><path d="M0.5 1L2.5 3.2L4.5 1" fill="none" stroke="#555" stroke-width="1"/></svg>
<div class="t" style="left:279.00px;top:358.31px;font-size:6.3px;color:#1a1a1a;"><u>F</u>ormat:</div>
<div class="a" style="left:303.80px;top:355.00px;width:99.20px;height:12.00px;background:#e5e5e5;border:1px solid #adadad"></div>
<div class="t" style="left:306.00px;top:358.51px;font-size:6.3px;color:#1a1a1a;">Unformatted Text</div>
<svg class="a" style="left:395.50px;top:358.70px" width="5" height="5" viewBox="0 0 5 5"><path d="M0.5 1L2.5 3.2L4.5 1" fill="none" stroke="#555" stroke-width="1"/></svg>
<div class="a" style="left:406.00px;top:357.20px;width:7.20px;height:7.20px;background:#fff;border:0.9px solid #3a3a3a"></div>
<svg class="a" style="left:406.00px;top:357.20px" width="8" height="8" viewBox="0 0 8 8"><path d="M1.6 4L3.3 5.8L6.4 1.8" fill="none" stroke="#222" stroke-width="0.9"/></svg>
<div class="t" style="left:414.30px;top:358.51px;font-size:6.3px;color:#1a1a1a;">Reset</div>
<div class="a" style="left:437.20px;top:354.40px;width:49.00px;height:13.40px;background:#d4d4d4;border:1px solid #cfcfcf"></div>
<svg class="a" style="left:446.00px;top:356.50px" width="9" height="9" viewBox="0 0 9 9"><rect x="1" y="3" width="6.5" height="5.5" fill="#e8e8e8" stroke="#888" stroke-width="0.6"/><path d="M2 7L7.5 1.2" stroke="#6a6a6a" stroke-width="1"/><path d="M7 0.5l1.5 1.5" stroke="#3a3a3a" stroke-width="1"/></svg>
<div class="t" style="left:456.50px;top:358.71px;font-size:6.3px;color:#1a1a1a;">Connect</div>
<svg class="a" style="left:586.50px;top:355.00px" width="10" height="10" viewBox="0 0 10 10"><path d="M1.2 9L8 2" stroke="#3058b0" stroke-width="1.7"/><path d="M1.5 1.5L8.8 8.8" stroke="#c85a48" stroke-width="1.5"/><path d="M0.6 0.8l2 0.4" stroke="#999" stroke-width="1.1"/><path d="M7.5 0.8l1.6 1.2" stroke="#999" stroke-width="1"/></svg>
<div class="a" style="left:138.00px;top:381.50px;width:462.00px;height:156.50px;background:#fff"></div>
<div class="a" style="left:138.20px;top:369.40px;width:41.50px;height:12.60px;background:#fff"></div>
<svg class="a" style="left:142.00px;top:371.20px" width="8" height="7" viewBox="0 0 8 7"><rect x="0" y="0" width="8" height="7" rx="0.8" fill="#2a3a2a"/><rect x="0.8" y="0.8" width="6.4" height="5.4" fill="#3a5a3a"/><path d="M1.5 2.5l1.5 1l-1.5 1" stroke="#90e070" stroke-width="0.7" fill="none"/></svg>
<div class="t" style="left:154.30px;top:373.06px;font-size:6.0px;color:#1a1a1a;">Terminal</div>
<div class="a" style="left:180.00px;top:371.00px;width:33.50px;height:10.50px;background:#f5f5f5;border:1px solid #e6e6e6;border-bottom:none"></div>
<svg class="a" style="left:184.00px;top:372.30px" width="8" height="7" viewBox="0 0 8 7"><rect x="0" y="0" width="8" height="7" rx="0.8" fill="#3a70c8"/><rect x="0.8" y="0.8" width="6.4" height="5.4" fill="#5a98e0"/><path d="M0.8 4.5h6.4" stroke="#c8e0f8" stroke-width="0.6"/></svg>
<div class="t" style="left:195.00px;top:373.91px;font-size:6.3px;color:#1a1a1a;">Scope</div>
<div class="a" style="left:143.00px;top:389.30px;width:7.20px;height:7.20px;background:#fff;border:0.9px solid #3a3a3a"></div>
<svg class="a" style="left:143.00px;top:389.30px" width="8" height="8" viewBox="0 0 8 8"><path d="M1.6 4L3.3 5.8L6.4 1.8" fill="none" stroke="#222" stroke-width="0.9"/></svg>
<div class="t" style="left:152.30px;top:390.86px;font-size:6.0px;color:#1a1a1a;">Auto Scroll</div>
<div class="a" style="left:188.20px;top:389.30px;width:7.20px;height:7.20px;background:#fff;border:0.9px solid #3a3a3a"></div>
<div class="t" style="left:196.50px;top:390.71px;font-size:6.3px;color:#1a1a1a;">Hold</div>
<div class="a" style="left:543.70px;top:384.00px;width:49.10px;height:13.50px;background:#e1e1e1;border:1px solid #cdcdcd"></div>
<svg class="a" style="left:556.00px;top:385.80px" width="9" height="10" viewBox="0 0 9 10"><path d="M1 1L4.5 5" stroke="#8a6a30" stroke-width="1"/><path d="M3 4.5L7 3.5L8.5 8.5L4 9.5z" fill="#f0c828"/><path d="M4.5 9L8 8" stroke="#b89010" stroke-width="0.7"/></svg>
<div class="t" style="left:566.90px;top:388.91px;font-size:5.9px;color:#1a1a1a;">Clear</div>
<div class="a" style="left:139.40px;top:401.50px;width:456.90px;height:115.30px;background:#fff;border:1px solid #a8a8a8;border-right-color:#c8c8c8;border-bottom-color:#c8c8c8"></div>
<div class="a" style="left:586.50px;top:402.50px;width:8.80px;height:113.30px;background:#fdfdfd"></div>
<svg class="a" style="left:588.50px;top:405.50px" width="5" height="5" viewBox="0 0 5 5"><path d="M0.5 3.2L2.5 1L4.5 3.2" fill="none" stroke="#b0b0b0" stroke-width="1"/></svg>
<svg class="a" style="left:588.50px;top:508.50px" width="5" height="5" viewBox="0 0 5 5"><path d="M0.5 1L2.5 3.2L4.5 1" fill="none" stroke="#b0b0b0" stroke-width="1"/></svg>
<div class="a" style="left:144.00px;top:521.00px;width:359.60px;height:12.40px;background:#fff;border:1px solid #dadada"></div>
<div class="a" style="left:506.90px;top:523.60px;width:7.20px;height:7.20px;background:#fff;border:0.9px solid #3a3a3a"></div>
<svg class="a" style="left:506.90px;top:523.60px" width="8" height="8" viewBox="0 0 8 8"><path d="M1.6 4L3.3 5.8L6.4 1.8" fill="none" stroke="#222" stroke-width="0.9"/></svg>
<div class="t" style="left:516.00px;top:525.09px;font-size:6.15px;color:#1a1a1a;">Auto Clear</div>
<div class="a" style="left:552.20px;top:521.30px;width:40.50px;height:12.40px;background:#cdcdcd;border:1px solid #c4c4c4"></div>
<svg class="a" style="left:560.50px;top:523.50px" width="9" height="8" viewBox="0 0 9 8"><rect x="0.5" y="2" width="7" height="5.5" fill="#e0e0e0" stroke="#888" stroke-width="0.6"/><rect x="2" y="4" width="3" height="3" fill="#666"/></svg>
<div class="t" style="left:571.00px;top:525.51px;font-size:5.9px;color:#1a1a1a;">Send</div>
<!--/SERIAL-->
<!--PALETTE-->
<div class="a" style="left:600.00px;top:42.00px;width:147.00px;height:496.00px;background:#f0f0f0;border-left:1px solid #e4e4e4"></div>
<div class="a" style="left:600.00px;top:42.00px;width:146.00px;height:15.50px;background:#fbefe6"></div>
<div class="a" style="left:603.20px;top:44.60px;width:62.00px;height:11.60px;background:#fff;border:1px solid #b8b8b8;box-shadow:inset 0 0 0 1px #e8e8e8"></div>
<div class="t" style="left:604.80px;top:47.51px;font-size:6.3px;color:#000;">sonic</div>
<svg class="a" style="left:668.00px;top:45.50px" width="10" height="10" viewBox="0 0 10 10"><path d="M1.5 1.5L8.5 8.5M8.5 1.5L1.5 8.5" stroke="#b83838" stroke-width="1.8"/><path d="M2.5 9L5 6.5" stroke="#704040" stroke-width="1"/></svg>
<div class="a" style="left:679.70px;top:45.00px;width:11.00px;height:11.20px;background:#cfe0ee;border:1px solid #c0d4e6"></div>
<svg class="a" style="left:681.00px;top:45.50px" width="9" height="10" viewBox="0 0 9 10"><path d="M4.8 0.8L2 7.5h5.5z" fill="#384c98"/><ellipse cx="4.5" cy="8" rx="4" ry="1.4" fill="#2c3c88"/><circle cx="5" cy="4" r="0.7" fill="#e8e0a0"/></svg>
<svg class="a" style="left:691.50px;top:49.80px" width="3" height="2" viewBox="0 0 3 2"><path d="M0 0h3L1.5 2z" fill="#222"/></svg>
<svg class="a" style="left:697.00px;top:46.00px" width="10" height="9" viewBox="0 0 10 9"><path d="M0.5 1.5h3.5l1 1h4v6h-8.5z" fill="#f0dc98" stroke="#d0b060" stroke-width="0.5"/><circle cx="6.2" cy="5.8" r="2.2" fill="#f8f0c0" stroke="#c8a860" stroke-width="0.6"/></svg>
<svg class="a" style="left:709.00px;top:46.00px" width="10" height="9" viewBox="0 0 10 9"><path d="M0.5 1.5h3.5l1 1h4v6h-8.5z" fill="#eee0b0" stroke="#d0b880" stroke-width="0.5"/><ellipse cx="5.5" cy="6.2" rx="3" ry="2.3" fill="#48b4cc"/></svg>
<svg class="a" style="left:721.00px;top:46.00px" width="10" height="9" viewBox="0 0 10 9"><path d="M0.5 1.5h3.5l1 1h4v6h-8.5z" fill="#eee0b0" stroke="#d0b880" stroke-width="0.5"/><ellipse cx="5.2" cy="6.2" rx="3" ry="2.1" fill="#4aa8c4"/></svg>
<svg class="a" style="left:733.00px;top:45.50px" width="10" height="10" viewBox="0 0 10 10"><path d="M1.2 9L8 2" stroke="#3058b0" stroke-width="1.7"/><path d="M1.5 1.5L8.8 8.8" stroke="#c85a48" stroke-width="1.5"/><path d="M7.5 0.8l1.6 1.2" stroke="#999" stroke-width="1"/></svg>
<div class="a" style="left:603.00px;top:59.80px;width:70.50px;height:70.00px;background:#fff;border:1.6px solid #2e2e2e;border-radius:3.5px;overflow:hidden"></div>
<div class="a" style="left:604.00px;top:60.80px;width:68.50px;height:11.00px;background:linear-gradient(#a4a4a4,#7c7c7c 50%,#666);border-bottom:1px solid #3a3a3a;border-radius:2.5px 2.5px 0 0"></div>
<svg class="a" style="left:606.00px;top:62.80px" width="9" height="8" viewBox="0 0 9 8"><path d="M1 7L6 2" stroke="#b08050" stroke-width="1.3"/><circle cx="6.5" cy="1.8" r="1.5" fill="#c8a070"/></svg>
<div class="t" style="left:616.50px;top:63.31px;font-size:6.3px;color:#f2f2f2;text-shadow:0 0 1px #444;-webkit-text-stroke:0.1px #f2f2f2">Measurement</div>
<div class="a" style="left:609.20px;top:77.30px;width:45.80px;height:44.90px;background:#fff;border:1.6px solid #2e2e2e;border-radius:3.5px;overflow:hidden"></div>
<div class="a" style="left:610.20px;top:78.30px;width:43.80px;height:11.00px;background:linear-gradient(#a4a4a4,#7c7c7c 50%,#666);border-bottom:1px solid #3a3a3a;border-radius:2.5px 2.5px 0 0"></div>
<svg class="a" style="left:612.20px;top:80.30px" width="9" height="8" viewBox="0 0 9 8"><ellipse cx="4.5" cy="5" rx="4" ry="2.8" fill="#f0b040"/><path d="M1 4.5Q3 0.5 4.5 3.5Q6 5.5 8 2.5" fill="none" stroke="#d83018" stroke-width="1.5"/></svg>
<div class="t" style="left:622.70px;top:80.81px;font-size:6.3px;color:#f2f2f2;text-shadow:0 0 1px #444;-webkit-text-stroke:0.1px #f2f2f2">Analog</div>
<div class="a" style="left:677.00px;top:59.80px;width:45.50px;height:45.00px;background:#fff;border:1.6px solid #2e2e2e;border-radius:3.5px;overflow:hidden"></div>
<div class="a" style="left:678.00px;top:60.80px;width:43.50px;height:11.00px;background:linear-gradient(#a4a4a4,#7c7c7c 50%,#666);border-bottom:1px solid #3a3a3a;border-radius:2.5px 2.5px 0 0"></div>
<svg class="a" style="left:680.00px;top:62.80px" width="9" height="8" viewBox="0 0 9 8"><ellipse cx="4.5" cy="5" rx="4" ry="2.8" fill="#f0b040"/><path d="M1 4.5Q3 0.5 4.5 3.5Q6 5.5 8 2.5" fill="none" stroke="#d83018" stroke-width="1.5"/></svg>
<div class="t" style="left:690.50px;top:63.31px;font-size:6.3px;color:#f2f2f2;text-shadow:0 0 1px #444;-webkit-text-stroke:0.1px #f2f2f2">Analog</div>
<div class="a" style="left:615.40px;top:94.40px;width:21.00px;height:21.00px;background:linear-gradient(#d4e4f8,#bfe6f2);border:1.3px solid #7088cc;border-radius:2.5px"></div>
<svg class="a" style="left:616.30px;top:95.80px" width="19" height="16" viewBox="0 0 19 16"><path d="M0.5 11L12 2.5L16.5 6L5 15z" fill="#2a8a78"/><path d="M2 11L12 4" stroke="#70c0a8" stroke-width="0.8"/><circle cx="7.8" cy="10" r="4" fill="#e8e8e0"/><circle cx="7.8" cy="10" r="2.9" fill="#3a3038"/><circle cx="7.3" cy="9.4" r="1" fill="#6a6068"/><circle cx="14.7" cy="5.8" r="3.7" fill="#d8dcd8"/><circle cx="14.7" cy="5.8" r="2.7" fill="#403840"/><circle cx="14.2" cy="5.3" r="0.9" fill="#6a6068"/></svg>
<div class="a" style="left:683.30px;top:77.30px;width:20.70px;height:20.00px;background:linear-gradient(#a8a8a8,#6e6e6e);border:1.2px solid #3a3a3a;border-radius:2.5px"></div>
<svg class="a" style="left:684.30px;top:79.00px" width="19" height="16" viewBox="0 0 19 16"><path d="M0.5 11L12 2.5L16.5 6L5 15z" fill="#2a8a78"/><path d="M2 11L12 4" stroke="#70c0a8" stroke-width="0.8"/><circle cx="7.8" cy="10" r="4" fill="#e8e8e0"/><circle cx="7.8" cy="10" r="2.9" fill="#3a3038"/><circle cx="7.3" cy="9.4" r="1" fill="#6a6068"/><circle cx="14.7" cy="5.8" r="3.7" fill="#d8dcd8"/><circle cx="14.7" cy="5.8" r="2.7" fill="#403840"/><circle cx="14.2" cy="5.3" r="0.9" fill="#6a6068"/></svg>
<div class="a" style="left:618.70px;top:120.20px;width:72.50px;height:36.10px;background:#fff;border:1px solid #9a9a9a;box-shadow:2px 2px 1.5px rgba(0,0,0,.35)"></div>
<div class="t" style="left:622.00px;top:122.26px;font-size:6.2px;color:#383838;">Ultrasonic Ranger(Ping)</div>
<div class="a" style="left:622.00px;top:129.30px;width:47.00px;height:23.40px;background:#b0c4de;border:1px solid #9098a8;border-radius:1.5px"></div>
<div class="a" style="left:622.50px;top:129.80px;width:46.00px;height:6.20px;background:linear-gradient(#f8c8b0,#f0a080);border-bottom:1px solid #8a6a5a"></div>
<div class="t" style="left:627.00px;top:131.33px;font-size:3.2px;font-weight:bold;color:#7a2a10;">UltrasonicRanger1</div>
<div class="t" style="left:629.00px;top:137.38px;font-size:3.3px;color:#2a3a5a;">Clock</div>
<div class="t" style="left:629.00px;top:141.68px;font-size:3.3px;color:#2a3a5a;">Echo</div>
<div class="t" style="right:86.00px;top:137.38px;font-size:3.3px;color:#2a3a5a;">Out</div>
<div class="t" style="right:86.00px;top:141.68px;font-size:3.3px;color:#2a3a5a;">Ping(Trigger)</div>
<div class="t" style="right:86.00px;top:146.68px;font-size:3.3px;color:#2a3a5a;">Timeout</div>
<div class="a" style="left:663.00px;top:137.00px;width:4.00px;height:14.00px;background:#f09898"></div>
<div class="a" style="left:624.30px;top:137.00px;width:3.70px;height:4.00px;background:#e8e8f0;border:0.5px solid #667"></div>
<div class="a" style="left:624.30px;top:141.50px;width:3.70px;height:4.00px;background:#f09898"></div>
<div class="a" style="left:620.80px;top:138.00px;width:2.00px;height:2.00px;background:#fff;border:0.5px solid #444"></div>
<div class="a" style="left:620.80px;top:142.30px;width:2.00px;height:2.00px;background:#fff;border:0.5px solid #444"></div>
<div class="a" style="left:668.20px;top:138.00px;width:2.00px;height:2.00px;background:#fff;border:0.5px solid #444"></div>
<div class="a" style="left:668.20px;top:142.30px;width:2.00px;height:2.00px;background:#fff;border:0.5px solid #444"></div>
<div class="a" style="left:668.20px;top:147.30px;width:2.00px;height:2.00px;background:#fff;border:0.5px solid #444"></div>
<div class="a" style="left:745.00px;top:58.50px;width:1.00px;height:479.50px;background:#f6f6f6"></div>
<div class="a" style="left:746.00px;top:17.00px;width:2.00px;height:523.00px;background:#d4dae2"></div>
<div class="a" style="left:600.00px;top:524.70px;width:145.00px;height:13.80px;background:#fbefe6"></div>
<div class="t" style="left:651.00px;top:529.14px;font-size:6.45px;font-weight:bold;color:#1a1a1a;">Arduino eBay Ads:</div>
<svg class="a" style="left:723.50px;top:527.30px" width="10" height="9" viewBox="0 0 10 9"><path d="M1 8.5L8 1.5" stroke="#2a58b8" stroke-width="1.6"/><path d="M1.5 1.5L8.5 8.5" stroke="#b85040" stroke-width="1.5"/><path d="M0.5 0.5l2 0.3" stroke="#999" stroke-width="1.2"/><path d="M7.5 0.8l1.5 1" stroke="#aaa" stroke-width="1"/></svg>
<div class="a" style="left:736.60px;top:527.60px;width:8.40px;height:8.10px;background:linear-gradient(#e05060,#c02838);border-radius:1.2px;border:0.6px solid #902030"></div>
<svg class="a" style="left:738.30px;top:529.00px" width="5" height="5" viewBox="0 0 5 5"><circle cx="2.5" cy="2.6" r="1.9" fill="none" stroke="#fde" stroke-width="0.8"/><path d="M1.3 1.8l1.2 1.2l1.2-1.2" fill="none" stroke="#fde" stroke-width="0.7"/></svg>
<!--/PALETTE-->
<!-- window frame -->
<div class="a" style="left:0;top:17px;width:1px;height:523px;background:#8a9cb0"></div>
<div class="a" style="left:1px;top:169px;width:1px;height:370px;background:#fafcff"></div>
<div class="a" style="left:0;top:538.5px;width:748px;height:1.5px;background:#8aa0b8"></div>
</body></html>
